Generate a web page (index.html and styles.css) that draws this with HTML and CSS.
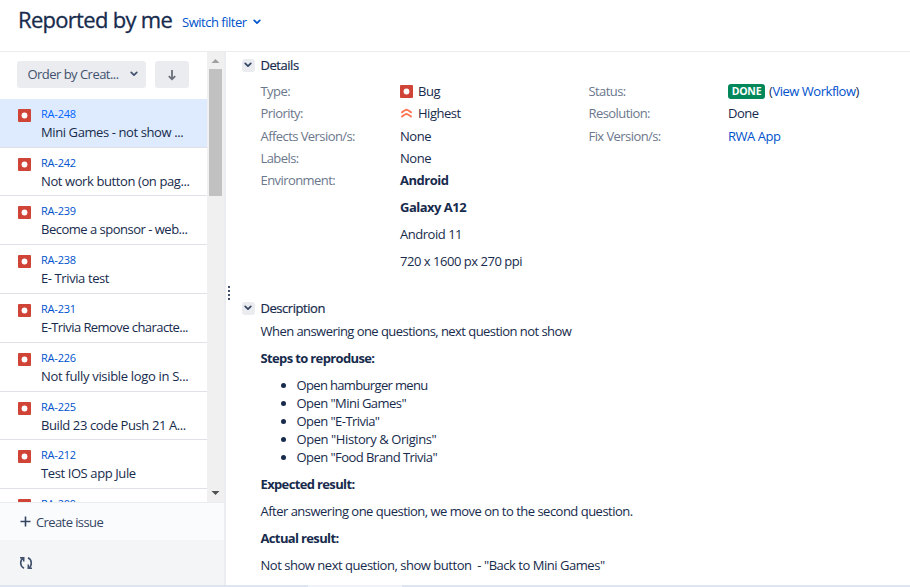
FILE: index.html
```html
<!DOCTYPE html>
<html lang="en">
<head>
<meta charset="utf-8">
<title>Reported by me</title>
<link rel="stylesheet" href="styles.css">
</head>
<body>
<svg class="defs" width="0" height="0">
  <symbol id="bug" viewBox="0 0 13 13"><rect width="13" height="13" rx="1" fill="#d04437"/><circle cx="6.5" cy="6.5" r="2.9" fill="#fff"/></symbol>
  <symbol id="chev" viewBox="0 0 8 6"><path d="M1.2 1.3 4 4.1 6.8 1.3" fill="none" stroke="currentColor" stroke-width="1.7" stroke-linecap="round" stroke-linejoin="round"/></symbol>
</svg>
<header class="header">
  <h1>Reported by me</h1>
  <a class="switch">Switch filter</a>
  <svg class="chev switch-chev"><use href="#chev"/></svg>
</header>
<div class="main">
  <aside class="sidebar">
    <div class="scroller">
      <div class="list">
        <div class="toolbar">
          <button class="btn order"><span>Order by Creat...</span><svg class="chev"><use href="#chev"/></svg></button>
          <button class="btn dir"><svg width="10" height="12" viewBox="0 0 10 12"><path d="M5 1v9M1.8 7.2 5 10.3 8.2 7.2" fill="none" stroke="#6b6f79" stroke-width="1.8"/></svg></button>
        </div>
        <div class="item selected"><svg class="bug"><use href="#bug"/></svg><div><a>RA-248</a><p>Mini Games - not show ...</p></div></div>
        <div class="item"><svg class="bug"><use href="#bug"/></svg><div><a>RA-242</a><p>Not work button (on pag...</p></div></div>
        <div class="item"><svg class="bug"><use href="#bug"/></svg><div><a>RA-239</a><p class="sponsor">Become a sponsor - web...</p></div></div>
        <div class="item"><svg class="bug"><use href="#bug"/></svg><div><a>RA-238</a><p>E- Trivia test</p></div></div>
        <div class="item"><svg class="bug"><use href="#bug"/></svg><div><a>RA-231</a><p class="tight">E-Trivia Remove characte...</p></div></div>
        <div class="item"><svg class="bug"><use href="#bug"/></svg><div><a>RA-226</a><p class="loose">Not fully visible logo in S...</p></div></div>
        <div class="item"><svg class="bug"><use href="#bug"/></svg><div><a>RA-225</a><p>Build 23 code Push 21 A...</p></div></div>
        <div class="item"><svg class="bug"><use href="#bug"/></svg><div><a>RA-212</a><p>Test IOS app Jule</p></div></div>
        <div class="item"><svg class="bug"><use href="#bug"/></svg><div><a>RA-209</a></div></div>
      </div>
      <div class="scrollbar">
        <svg width="17" height="17" viewBox="0 0 17 17"><path d="M4.5 11 8.5 7l4 4z" fill="#a0a0a0"/></svg>
        <div class="thumb"></div>
        <svg class="down" width="17" height="17" viewBox="0 0 17 17"><path d="M4.5 6 8.5 10l4-4z" fill="#505050"/></svg>
      </div>
    </div>
    <div class="create"><svg width="11" height="11" viewBox="0 0 11 11"><path d="M5.5.5v10M.5 5.5h10" stroke="#344563" stroke-width="1.6"/></svg><span>Create issue</span></div>
    <div class="refresh"><svg width="14" height="14" viewBox="0 0 14 14" fill="none" stroke="#42526e" stroke-width="1.6"><path d="M1 1.800h3.700v3.700M4.400 2C2.500 3 1.700 4.800 1.700 7c0 2.200 1 4 3.300 5.200M13 12.200H9.300V8.500M9.600 12c1.900-1 2.700-2.800 2.700-5 0-2.200-1-4-3.300-5.200"/></svg></div>
  </aside>
  <div class="grip"><i></i><i></i><i></i><i></i></div>
  <main class="content">
    <h2><span class="toggle"><svg class="chev"><use href="#chev"/></svg></span><span>Details</span></h2>
    <div class="details">
      <dl>
        <dt>Type:</dt><dd><svg class="bug"><use href="#bug"/></svg><span>Bug</span></dd>
        <dt>Priority:</dt><dd><svg class="prio" viewBox="0 0 13 12" fill="none" stroke="#ff7452" stroke-width="1.9" stroke-linecap="round"><path d="M2 5.300Q4 3.500 6.500 2.700 9 3.500 11 5.300M2 9.500Q4 7.700 6.500 6.900 9 7.700 11 9.500"/></svg><span>Highest</span></dd>
        <dt>Affects Version/s:</dt><dd>None</dd>
        <dt>Labels:</dt><dd>None</dd>
        <dt>Environment:</dt><dd class="env"><b>Android</b><b>Galaxy A12</b><span>Android 11</span><span>720 x 1600 px 270 ppi</span></dd>
      </dl>
      <dl>
        <dt>Status:</dt><dd class="status"><span class="done">DONE</span><span>(<a>View Workflow</a>)</span></dd>
        <dt>Resolution:</dt><dd>Done</dd>
        <dt>Fix Version/s:</dt><dd><a>RWA App</a></dd>
      </dl>
    </div>
    <h2><span class="toggle"><svg class="chev"><use href="#chev"/></svg></span><span>Description</span></h2>
    <div class="desc">
      <p>When answering one questions, next question not show</p>
      <p><b>Steps to reproduse:</b></p>
      <ul><li class="first">Open hamburger menu</li><li>Open "Mini Games"</li><li>Open "E-Trivia"</li><li class="wide">Open "History &amp; Origins"</li><li>Open "Food Brand Trivia"</li></ul>
      <p><b>Expected result:</b></p>
      <p class="expected">After answering one question, we move on to the second question.</p>
      <p><b>Actual result:</b></p>
      <p class="actual">Not show next question, show button &nbsp;- "Back to Mini Games"</p>
    </div>
  </main>
</div>
<div class="bottom"><i></i></div>
</body>
</html>
```
FILE: styles.css
```css
* { box-sizing: border-box; }
body { margin: 0; width: 910px; height: 587px; overflow: hidden; display: flex; flex-direction: column; background: #fff; color: #172b4d; font: 13px/18px "Open Sans", "Noto Sans", sans-serif; letter-spacing: -0.44px; white-space: nowrap; }
h1, h2, p, dl, dd, ul { margin: 0; padding: 0; font-weight: 400; }
a { color: #0052cc; }
b { font-weight: 700; letter-spacing: -0.64px; }
.defs { position: absolute; }
.header { height: 52px; flex: none; display: flex; align-items: flex-start; border-bottom: 1px solid #ebecf0; padding-left: 18px; }
h1 { font-size: 22px; line-height: 28px; font-weight: 500; letter-spacing: -0.7px; margin-top: 5px; width: 164px; -webkit-text-stroke: 0.3px #172b4d; }
.switch { margin-top: 13px; width: 71px; letter-spacing: -0.48px; }
.chev { width: 8px; height: 6px; }
.switch-chev { color: #0052cc; margin-top: 19px; }
.main { flex: 1; min-height: 0; display: flex; }
.sidebar { width: 226px; border-right: 2px solid #ebecf0; display: flex; flex-direction: column; }
.scroller { height: 450px; display: flex; overflow: hidden; }
.list { width: 207px; overflow: hidden; }
.toolbar { display: flex; gap: 9px; padding: 9px 0 0 17px; height: 46.75px; }
.btn { height: 27px; border: 0; border-radius: 3px; background: #ebecf0; font: inherit; letter-spacing: -0.53px; padding: 0; display: flex; align-items: center; }
.order { width: 129px; padding: 0 8px 1px 10.5px; justify-content: space-between; color: #42526e; }
.dir { width: 34px; justify-content: center; }
.item { height: 48.8px; display: flex; padding-left: 18px; border-bottom: 1px solid #dfe1e6; }
.item > div { padding-left: 10px; }
.item a { display: block; font-size: 11px; line-height: 16px; margin-top: 7px; letter-spacing: -0.2px; }
.item p { line-height: 18px; margin-top: 1px; letter-spacing: -0.4px; }
.item p.sponsor { letter-spacing: -0.5px; }
.item p.tight { letter-spacing: -0.57px; }
.item p.loose { letter-spacing: -0.32px; }
.bug { width: 13px; height: 13px; flex: none; }
.item .bug { margin-top: 10px; }
.selected { background: #deebff; }
.selected a { color: #0065ff; }
.scrollbar { width: 17px; background: #f0f0f0; display: flex; flex-direction: column; align-items: center; }
.thumb { width: 13px; height: 127px; background: #c1c1c1; }
.down { margin-top: auto; }
.create { height: 38px; border-top: 1px solid #ebecf0; background: #fafbfc; color: #344563; display: flex; align-items: center; gap: 5px; padding: 0 0 0 20px; letter-spacing: -0.6px; }
.create span { padding-top: 1px; }
.refresh { flex: 1; background: #f4f5f7; display: flex; align-items: center; padding-left: 18.5px; }
.grip { flex: none; width: 10px; display: flex; flex-direction: column; gap: 2px; padding: 234px 0 0 2px; }
.grip i { width: 2px; height: 2px; background: #42526e; }
.content { flex: 1; padding: 4px 0 0 5.5px; }
h2 { font-size: 13px; line-height: 18px; height: 18px; display: flex; align-items: center; gap: 6px; font-weight: 500; letter-spacing: -0.45px; -webkit-text-stroke: 0.2px #172b4d; }
.toggle { width: 13px; height: 13px; border-radius: 3px; background: #ebecf0; display: flex; align-items: center; justify-content: center; color: #344563; }
.details { display: flex; height: 225px; padding: 6px 0 0 19px; }
dl { width: 328px; display: grid; grid-template-columns: 139.5px 1fr; grid-auto-rows: 22.3px; align-content: start; line-height: 22px; }
dt { color: #6b778c; letter-spacing: -0.57px; }
dd { display: flex; align-items: center; gap: 5px; letter-spacing: -0.47px; }
dd.status { gap: 4px; }
.prio { width: 13px; height: 12px; }
dd.env { flex-direction: column; align-items: flex-start; gap: 5px; }
dd.env b { letter-spacing: -0.5px; }
.done { background: #00875a; color: #fff; font-weight: 700; font-size: 10.5px; line-height: 15px; height: 15px; width: 37px; text-align: center; border-radius: 3px; letter-spacing: -0.2px; }
.desc { padding: 5px 0 0 19px; letter-spacing: -0.55px; }
.desc p { line-height: 18px; margin-bottom: 9px; }
.expected { letter-spacing: -0.51px; }
.actual { letter-spacing: -0.47px; }
ul { list-style: none; margin-bottom: 9px; }
li { display: flex; align-items: center; padding-left: 20px; }
li.first { letter-spacing: -0.65px; }
li.wide { letter-spacing: -0.42px; }
li::before { content: ""; width: 5px; height: 5px; border-radius: 50%; background: #172b4d; margin-right: 11px; }
.bottom { height: 2px; background: #dce5f0; padding-left: 308px; flex: none; }
.bottom i { display: block; width: 94px; height: 2px; background: #eef3f9; }
```
